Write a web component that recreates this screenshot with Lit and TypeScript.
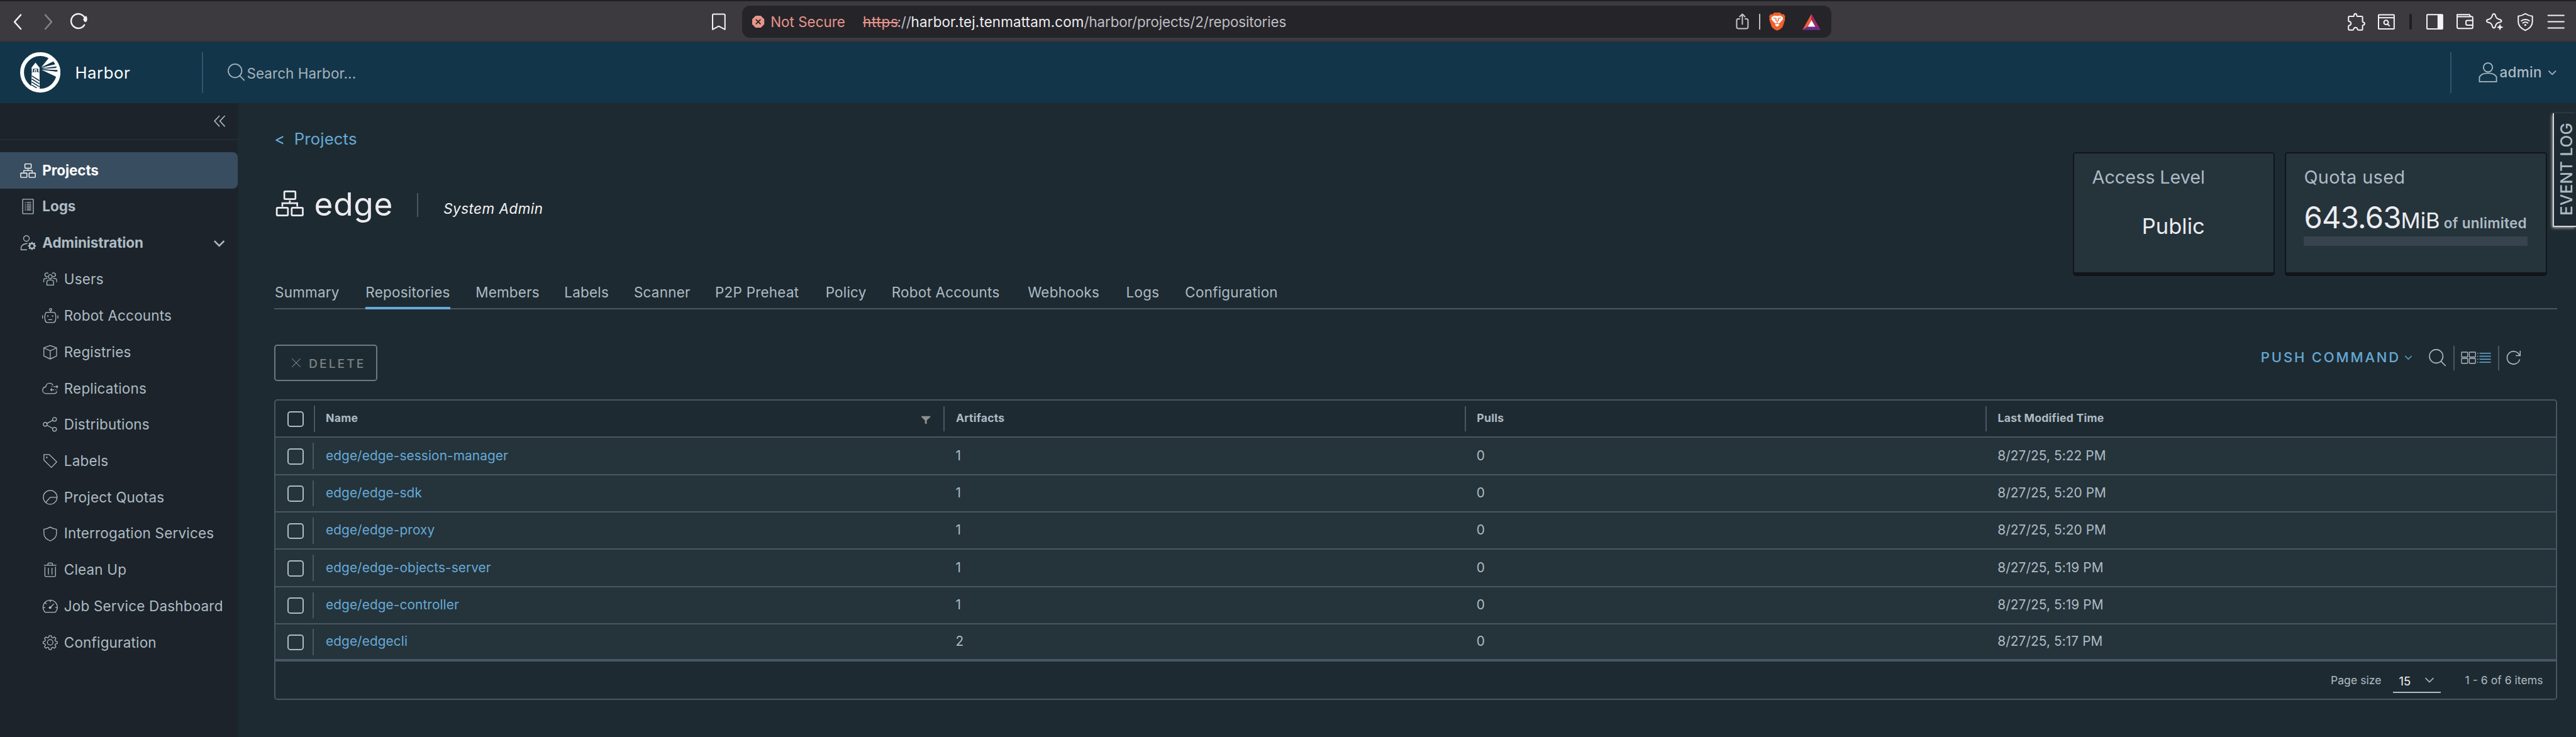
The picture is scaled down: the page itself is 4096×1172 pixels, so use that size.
import { LitElement, html, css, svg, nothing, TemplateResult, SVGTemplateResult } from "lit";
import { customElement, property } from "lit/decorators.js";

/* ---------- icon library (36 x 36 grid, stroked with currentColor) ---------- */

const GEAR =
  "M15.6 2.5h4.8l.9 4.1 2.6 1.1 3.6-2.2 3.3 3.3-2.2 3.6 1.1 2.6 4 .9v4.4l-4 .9-1.1 2.6 2.2 3.6-3.3 3.3-3.6-2.2-2.6 1.1-.9 3.9h-4.8l-.9-3.9-2.6-1.1-3.6 2.2-3.3-3.3 2.2-3.6-1.1-2.6-4-.9v-4.4l4-.9 1.1-2.6-2.2-3.6 3.3-3.3 3.6 2.2 2.6-1.1z";

const ICONS: Record<string, SVGTemplateResult> = {
  organization: svg`<rect x="12" y="4.5" width="12.4" height="8.6" rx="1"/><rect x="3.6" y="22.7" width="12.4" height="8.6" rx="1"/><rect x="20.2" y="22.7" width="12.4" height="8.6" rx="1"/><path d="M18.1 14.6v3M9.8 21.4v-3.8h16.6v3.8"/>`,
  logs: svg`<rect x="7.6" y="3.6" width="21" height="28.6" rx=".6"/><path d="M15.5 9.8h9M15.5 13.5h9M15.5 17.2h9M15.5 20.9h9M15.5 24.6h9M11.8 9.8h1.8M11.8 13.5h1.8M11.8 17.2h1.8M11.8 20.9h1.8M11.8 24.6h1.8"/>`,
  administrator: svg`<circle cx="15" cy="9" r="5.6"/><path d="M16 31.5H4.4v-5.7c1.8-4 6.6-6.6 12.6-6.8"/><path class="fill" fill-rule="evenodd" d="M24.9 15.8h2.2l.5 2 1.5.6 1.8-1.1 1.6 1.6-1.1 1.8.6 1.5 2 .5v2.2l-2 .5-.6 1.5 1.1 1.8-1.6 1.6-1.8-1.1-1.5.6-.5 2h-2.2l-.5-2-1.5-.6-1.8 1.1-1.6-1.6 1.1-1.8-.6-1.5-2-.5v-2.2l2-.5.6-1.5-1.1-1.8 1.6-1.6 1.8 1.1 1.5-.6zM26 20.7a3.2 3.2 0 1 0 0 6.4a3.2 3.2 0 0 0 0-6.4z"/>`,
  users: svg`<circle cx="18" cy="12.6" r="4.3"/><path d="M10.6 31.4v-7.2c0-2.8 3.4-4.4 7.4-4.4s7.4 1.6 7.4 4.4v7.2z"/><path d="M12 12.2A4.2 4.2 0 1 1 13.6 5.6M24 12.2A4.2 4.2 0 1 0 22.4 5.6M3.6 25v-5.4c0-2 3.2-3.6 8-3.3M32.4 25v-5.4c0-2-3.2-3.6-8-3.3"/>`,
  robot: svg`<circle cx="19" cy="4.8" r="2.5"/><path d="M19 7.4v3.3M11 10.8h14.6c2 0 3.2 1 3.8 2.8 1.6 4.4 1.6 9.6.4 15.2-.8 3-2.2 4.6-4.6 4.6H11.4c-2.4 0-3.8-1.6-4.6-4.6-1.2-5.6-1.2-10.8.4-15.2.6-1.8 1.8-2.8 3.8-2.8zM13.6 27.2h9M1 17.6v6.8M35.2 17.6v6.8"/><circle class="fill" cx="12.8" cy="19" r="1.6"/><circle class="fill" cx="23.4" cy="19" r="1.6"/>`,
  box: svg`<path d="M18 3.4l14.2 5.4v18L18 33.6 3.8 26.8v-18zM3.8 8.8L18 15.2l14.2-6.4M18 15.2v18.4"/>`,
  replication: svg`<path d="M24 11.2C22.8 8 20 6.2 16.6 6.2c-4.6 0-8 3.4-8.4 8.2C4 14.8 1.2 17.8 1.2 21.8c0 4.4 3.2 7.6 7.6 7.6h17.6c3.6 0 6-2.2 6-5.2M25 14h9.6M32 11.2l2.8 2.8-2.8 2.8M19 20.8h8M21.8 18l-2.8 2.8 2.8 2.8"/><path d="M20.6 14h1.6M29.4 20.8h1.4M32.6 20.8h1"/>`,
  share: svg`<circle cx="6.8" cy="18" r="4.3"/><circle cx="27.6" cy="6.8" r="4.3"/><circle cx="27.6" cy="29" r="4.3"/><path d="M10.7 16l13-7M10.7 20l13 7"/>`,
  tag: svg`<path d="M4 4h12l16.6 16.3L20.6 32.8 4 16.5z"/><circle class="fill" cx="10.4" cy="10.4" r="1.7"/>`,
  quota: svg`<circle cx="18" cy="18" r="15.4"/><path d="M33.4 18H18L8 29.5"/>`,
  shield: svg`<path d="M18 3c4.6 3 9 4.4 14 5v9.6c0 7.6-5.4 12.8-14 16.4C9.4 30.4 4 25.2 4 17.6V8c5-.6 9.4-2 14-5z"/>`,
  trash: svg`<path d="M4 8.2h28M13 7.8V4.6c0-.8.6-1.4 1.4-1.4h7.2c.8 0 1.4.6 1.4 1.4v3.2M6.2 11.6v19.6c0 1.4.8 2.2 2.2 2.2h19.2c1.4 0 2.2-.8 2.2-2.2V11.6M14 14v15M22 14v15"/>`,
  dashboard: svg`<path d="M6.6 31.6h22.8c2.8-2.8 4.6-6.6 4.6-10.8a16 16 0 0 0-32 0c0 4.2 1.8 8 4.6 10.8zM18 5v4.6M2.5 21.2h4.2M29.3 21.2h4.2M6.8 10.4l3 2.8M18.6 20.6l7.6-7.8"/><circle class="fill" cx="17.8" cy="21.4" r="2.9"/>`,
  gear: svg`<path stroke-linejoin="round" d=${GEAR}/><circle cx="18" cy="17.5" r="6.2"/>`,
  search: svg`<circle cx="14.6" cy="14.5" r="13.4"/><path d="M24.2 24.5L33.4 33.7"/>`,
  user: svg`<circle cx="18" cy="9.3" r="8"/><path d="M2.8 34.6v-8.4C5.4 22 11 19.6 18 19.6S30.6 22 33.2 26.2v8.4z"/>`,
  caret: svg`<path d="M3.5 11.5L18 26l14.5-14.5"/>`,
  collapse: svg`<path d="M17 2L2 18l15 16M33 2L18 18l15 16"/>`,
  close: svg`<path d="M3 3l30 30M33 3L3 33"/>`,
  grid: svg`<rect x="1.5" y="4.5" width="14.6" height="11.6" rx="1"/><rect x="20" y="4.5" width="14.6" height="11.6" rx="1"/><rect x="1.5" y="19.5" width="14.6" height="11.6" rx="1"/><rect x="20" y="19.5" width="14.6" height="11.6" rx="1"/>`,
  list: svg`<path d="M7 7.5h28M7 14.8h28M7 22h28M7 29.3h28M1.5 7.5h2.4M1.5 14.8h2.4M1.5 22h2.4M1.5 29.3h2.4"/>`,
  refresh: svg`<path d="M31.6 21.5A14.3 14.3 0 1 1 31 12.8M32.6 2.5v10.8H22.6"/>`,
  filter: svg`<path class="fill" d="M0 2h36v3L21.5 18.5V34L14 31V18.5L0 5z"/>`,
  back: svg`<path stroke-linecap="round" stroke-linejoin="round" d="M23.8 4.5L11.3 18.5 23.8 32.5"/>`,
  forward: svg`<path stroke-linecap="round" stroke-linejoin="round" d="M11.2 4.5L23.7 18.5 11.2 32.5"/>`,
  reload: svg`<path stroke-linecap="round" d="M29 24.5A14.3 14.3 0 1 1 30.2 11.5"/><path class="fill" d="M26.5 13.5c1.8-2.6 3.5-4.8 5-6.8 2 .2 3.2 3.4 3 7-.2 4-3 6-5 4.6-1.6-1.2-2.6-3-3-4.8z"/>`,
  bookmark: svg`<path stroke-linejoin="round" d="M6.3 5.5c0-1.4.9-2.3 2.3-2.3h20c1.4 0 2.3.9 2.3 2.3v28L18.5 27 6.3 33.5z"/>`,
  shareUp: svg`<path stroke-linecap="round" stroke-linejoin="round" d="M12.5 12.5h-2.5c-2 0-3.2 1.2-3.2 3.2v12.8c0 2 1.2 3.2 3.2 3.2h16c2 0 3.2-1.2 3.2-3.2V15.7c0-2-1.2-3.2-3.2-3.2h-2.5M18 23V3.5M12.8 8.2L18 3.2l5.2 5"/>`,
  puzzle: svg`<path stroke-linejoin="round" d="M4.5 7.5h8c1 0 1.3-.7 1.3-1.7 0-2.2 1-3.5 2.7-3.5s2.7 1.3 2.7 3.5c0 1 .3 1.7 1.3 1.7h8.2c1.5 0 2 .5 2 2v8c0 1 .3 1.3 1.2 1.6 2 .6 2.9 1.5 2.9 2.9s-.9 2.3-2.9 2.9c-.9.3-1.2.6-1.2 1.6V33c0 1.3-.4 1.7-1.7 1.7h-6.8c-1 0-1.2-.4-1.4-1.3-.5-2.7-2-3.9-4-3.9s-3.5 1.2-4 3.9c-.2.9-.4 1.3-1.4 1.3H4.5c-1.3 0-1.7-.4-1.7-1.7v-6c0-1 .5-1.2 1.3-1.4 2.6-.5 3.7-2 3.7-4s-1.1-3.5-3.7-4c-.8-.2-1.3-.5-1.3-1.5V9.5c0-1.5.4-2 1.7-2z"/>`,
  tabSearch: svg`<rect x="2.5" y="4.5" width="31" height="28" rx="1"/><path d="M3 10.2h30"/><circle cx="17.5" cy="19.5" r="4.3"/><path d="M20.8 23l3.8 4"/>`,
  sidebar: svg`<rect x="2.5" y="4" width="31" height="28.5" rx="1"/><path class="fill" d="M23.5 4h10v28.5h-10z"/>`,
  wallet: svg`<path stroke-linejoin="round" d="M2.5 4h24.5l2 3.8h1.5c2 0 3 1 3 2.8v18c0 2-.8 2.8-2.6 2.8H5.1c-1.8 0-2.6-.8-2.6-2.6zM2.8 8h26M33.5 15.5H22.5c-1.6 0-2.5.9-2.5 2.5v4.6c0 1.6.9 2.5 2.5 2.5h11"/>`,
  sparkle: svg`<path stroke-linejoin="round" d="M15.5 2.5c2 0 2.7 1.2 3.2 3.6.9 4.5 2.7 6.3 7.2 7.2 2.4.5 4.6 1.2 4.6 3.2s-2.2 2.7-4.6 3.2c-4.5.9-6.3 2.7-7.2 7.2-.5 2.4-1.2 3.6-3.2 3.6s-2.7-1.2-3.2-3.6c-.9-4.5-2.7-6.3-7.2-7.2-2.4-.5-4-1.2-4-3.2s1.6-2.7 4-3.2c4.5-.9 6.3-2.7 7.2-7.2.5-2.4 1.2-3.6 3.2-3.6z"/><path class="fill" d="M27.5 22.5l2 4.5 5 2-5 2-2 4.5-2-4.5-4.5-2 4.5-2z"/>`,
  vpn: svg`<path stroke-linejoin="round" d="M18 2.2c4.5 2.8 8.5 4.3 14 5V18c0 7.5-5.5 13.5-14 17.5C9.5 31.5 4 25.5 4 18V7.2c5.5-.7 9.5-2.2 14-5zM9.3 17c4.8-4.4 12.6-4.4 17.4 0M12.4 21.3c3.2-2.9 8-2.9 11.2 0"/><circle class="fill" cx="18" cy="24.5" r="1.9"/>`,
  menu: svg`<path stroke-linecap="round" d="M2 5.5h31.5M2 18h31.5M2 30.5h31.5"/>`,
};

@customElement("ui-icon")
export class UiIcon extends LitElement {
  static styles = css`
    :host { display: block; flex: none; width: 36px; height: 36px; --stroke: 2; }
    svg { display: block; width: 100%; height: 100%; fill: none; stroke: currentColor; stroke-width: var(--stroke); overflow: visible; }
    .fill { fill: currentColor; stroke: none; }
  `;
  @property() name = "";
  render() {
    return html`<svg viewBox="0 0 36 36">${ICONS[this.name] ?? nothing}</svg>`;
  }
}

/* ---------- browser toolbar ---------- */

@customElement("browser-bar")
export class BrowserBar extends LitElement {
  static styles = css`
    :host { display: block; }
    .bar { box-sizing: border-box; height: 84px; padding: 2px 22px 0 18px; display: flex; align-items: center; color: #f3f3f5; background: #3c3a3f; border-top: 2.5px solid #201f24; border-bottom: 2.5px solid #323138; }
    ui-icon { --stroke: 2.5; }
    .nav { display: flex; gap: 24px; width: 1389px; }
    .nav ui-icon { --stroke: 3; }
    .dim { color: #858488; }
    .pill { box-sizing: border-box; width: 2160px; height: 64px; margin-left: 29px; padding: 0 20px; border-radius: 16px; background: #252429; display: flex; align-items: center; font-size: 28px; white-space: pre; }
    .octagon { width: 24px; height: 24px; margin-right: 12px; flex: none; }
    .insecure { width: 183px; color: #e8958a; }
    .https { width: 68px; color: #e8958a; letter-spacing: 0.9px; text-decoration: line-through; text-decoration-thickness: 2.5px; }
    .path { color: #bfbec3; letter-spacing: -0.2px; }
    .domain { color: #ececf0; letter-spacing: 0.15px; }
    .actions { margin-left: auto; display: flex; align-items: center; }
    .actions > .up { color: #c5c4ca; }
    .rule { width: 2.5px; height: 32px; margin: 0 18px 0 14px; background: #bdbcc1; }
    .brave { width: 32px; height: 36px; display: block; }
    .bat { width: 36px; height: 32px; margin: 1px 2px 0 34px; display: block; }
    .tools { margin-left: auto; display: flex; gap: 24px; align-items: center; }
    .sep { width: 4px; height: 32px; margin: 0 4px; border-radius: 2px; background: #1f1e23; }
  `;
  render() {
    return html`
      <div class="bar">
        <div class="nav">
          <ui-icon name="back"></ui-icon>
          <ui-icon class="dim" name="forward"></ui-icon>
          <ui-icon name="reload"></ui-icon>
        </div>
        <ui-icon name="bookmark"></ui-icon>
        <div class="pill">
          <svg class="octagon" viewBox="0 0 24 24">
            <path d="M7 0h10l7 7v10l-7 7H7l-7-7V7z" fill="#e8958a"/>
            <path d="M8 8l8 8M16 8l-8 8" stroke="#252429" stroke-width="2.4" stroke-linecap="round"/>
          </svg>
          <span class="insecure">Not Secure</span>
          <span class="https">https</span><span class="path">://</span><span class="domain">harbor.tej.tenmattam.com</span><span class="path">/harbor/projects/2/repositories</span>
          <div class="actions">
            <ui-icon class="up" name="shareUp"></ui-icon>
            <div class="rule"></div>
            <svg class="brave" viewBox="0 0 32 36">
              <path d="M10 0h12l3 3.5 4-.5 3 4.5-1 3 .8 3L27 28.5 22 33l-6 3-6-3-5-4.5L.2 13.5 1 10.5 0 7.5 3 3l4 .5z" fill="#f0602c"/>
              <path d="M5 9l5-3 6 1 6-1 5 3 .6 4-5.6 6.5L19 22l-3-1.5L13 22l-3-2.5L4.4 13z" fill="#fff"/>
              <path d="M11 24.2l5-2 5 2-5 4z" fill="#fff"/>
              <path d="M8.5 10.5l5.5 1.2-.8 3.5 2.8 2 2.8-2-.8-3.5 5.5-1.2M16 17v4" fill="none" stroke="#f0602c" stroke-width="1.6"/>
            </svg>
            <svg class="bat" viewBox="0 0 36 32">
              <path d="M18 0L0 32l10.5-6.5L18 12.5z" fill="#f15a3a"/>
              <path d="M18 0l18 32-10.5-6.5L18 12.5z" fill="#9e2763"/>
              <path d="M0 32h36l-10.5-6.5h-15z" fill="#662d91"/>
              <path d="M18 12.5l7.5 13h-15z" fill="#fff"/>
            </svg>
          </div>
        </div>
        <div class="tools">
          <ui-icon name="puzzle"></ui-icon>
          <ui-icon name="tabSearch"></ui-icon>
          <div class="sep"></div>
          <ui-icon name="sidebar"></ui-icon>
          <ui-icon name="wallet"></ui-icon>
          <ui-icon name="sparkle"></ui-icon>
          <ui-icon name="vpn"></ui-icon>
          <ui-icon name="menu"></ui-icon>
        </div>
      </div>
    `;
  }
}

/* ---------- application header ---------- */

@customElement("harbor-header")
export class HarborHeader extends LitElement {
  static styles = css`
    :host { display: block; }
    .header { height: 120px; display: flex; align-items: center; background: #13354a; color: #fff; white-space: nowrap; }
    .logo { width: 80px; height: 80px; margin-left: 40px; }
    .title { width: 251px; margin-left: 29px; font-size: 32px; letter-spacing: 0.7px; }
    .rule { width: 2.5px; height: 80px; background: #34536a; }
    .search { display: flex; align-items: center; margin-left: 49px; color: #a6b3bc; font-size: 28px; letter-spacing: 0.1px; }
    .search ui-icon { --stroke: 2.2; margin-right: 2px; }
    .search span { padding-top: 2px; }
    .account { margin-left: auto; width: 249px; height: 80px; display: flex; align-items: center; color: #adbbc4; font-size: 28px; font-weight: 500; letter-spacing: 0.4px; }
    .account .rule { margin-right: 52px; }
    .who { width: 40px; height: 40px; margin-right: 3px; }
    .account span { padding-bottom: 2px; }
    .account .caret { width: 18px; height: 18px; margin-left: 12px; --stroke: 4; }
  `;
  render() {
    return html`
      <div class="header">
        <svg class="logo" viewBox="0 0 80 80">
          <circle cx="40" cy="40" r="36.2" fill="none" stroke="#fff" stroke-width="7.6"/>
          <path d="M42 30L58 10l9 8zM42.5 31L68 23l8 8.5zM42.5 32.8l32-1.3v5.5zM42.5 35l33 4-3.5 10z" fill="#fff"/>
          <path d="M42 30.5L66 18.5l3.7 5.5zM43 32L72 28v2.8zM43 34.4l31 .8v3z" fill="#13354a"/>
          <path d="M30.5 20.5L39 31.5H22z" fill="#fff"/>
          <path d="M23 31h15.5v8H23z" fill="#fff"/>
          <path d="M25.400 32.800h10.600v7h-10.600z" fill="#13354a"/>
          <path d="M28 33.800h5.500v6H28z" fill="#fff"/>
          <path d="M30 35.500h1.800v4.500H30z" fill="#13354a"/>
          <path d="M23 39.5h15.5v3L38.8 74 22 73z" fill="#fff"/>
          <path d="M23 47l15 9.5M23 53l15 9.5M23 59l15 9.5M23 65l10 6" stroke="#13354a" stroke-width="2"/>
        </svg>
        <div class="title">Harbor</div>
        <div class="rule"></div>
        <div class="search"><ui-icon name="search"></ui-icon><span>Search Harbor...</span></div>
        <div class="account">
          <div class="rule"></div>
          <ui-icon class="who" name="user"></ui-icon>
          <span>admin</span>
          <ui-icon class="caret" name="caret"></ui-icon>
        </div>
      </div>
    `;
  }
}

/* ---------- side navigation ---------- */

const SUB_ITEMS: [string, string][] = [
  ["users", "Users"],
  ["robot", "Robot Accounts"],
  ["box", "Registries"],
  ["replication", "Replications"],
  ["share", "Distributions"],
  ["tag", "Labels"],
  ["quota", "Project Quotas"],
  ["shield", "Interrogation Services"],
  ["trash", "Clean Up"],
  ["dashboard", "Job Service Dashboard"],
  ["gear", "Configuration"],
];

@customElement("side-nav")
export class SideNav extends LitElement {
  static styles = css`
    :host { display: block; width: 472px; flex: none; }
    .nav { height: 100%; background: #1c232a; color: #adbbc4; font-size: 28px; white-space: nowrap; }
    .top { box-sizing: border-box; height: 74px; display: flex; justify-content: flex-end; align-items: center; padding: 0 24px 0 0; border-bottom: 2.5px solid #232c34; margin-bottom: 24px; }
    .top ui-icon { width: 24px; height: 24px; --stroke: 3; }
    .item { box-sizing: border-box; height: 72px; padding: 0 25px 0 38px; display: flex; align-items: center; gap: 10px; font-weight: 700; letter-spacing: -0.1px; }
    .item ui-icon { --stroke: 1.7; }
    .item span { padding-bottom: 2px; }
    .active { background: #394d60; color: #fff; border-radius: 0 10px 10px 0; }
    .item .caret { margin-left: auto; width: 24px; height: 24px; --stroke: 5; }
    .sub { padding-left: 84px; gap: 11px; font-weight: 400; letter-spacing: 0.25px; }
    .sub ui-icon { width: 32px; height: 32px; --stroke: 1.8; }
    .sub span { padding-bottom: 1px; }
  `;
  render() {
    return html`
      <nav class="nav">
        <div class="top"><ui-icon name="collapse"></ui-icon></div>
        <div class="item active"><ui-icon name="organization"></ui-icon><span>Projects</span></div>
        <div class="item"><ui-icon name="logs"></ui-icon><span>Logs</span></div>
        <div class="item"><ui-icon name="administrator"></ui-icon><span>Administration</span><ui-icon class="caret" name="caret"></ui-icon></div>
        ${SUB_ITEMS.map(([icon, label]) => html`<div class="item sub"><ui-icon name=${icon}></ui-icon><span>${label}</span></div>`)}
      </nav>
    `;
  }
}

/* ---------- project header: breadcrumb, title, cards, tabs ---------- */

const TABS = ["Summary", "Repositories", "Members", "Labels", "Scanner", "P2P Preheat", "Policy", "Robot Accounts", "Webhooks", "Logs", "Configuration"];

@customElement("project-header")
export class ProjectHeader extends LitElement {
  static styles = css`
    :host { display: block; }
    .head { height: 344px; display: flex; justify-content: space-between; white-space: nowrap; }
    .crumb { display: flex; gap: 18px; height: 40px; line-height: 40px; margin-top: 52px; color: #65aad6; font-size: 32px; letter-spacing: 0.2px; }
    .title { display: flex; align-items: center; height: 80px; margin-top: 68px; color: #ececf0; }
    .title ui-icon { width: 64px; height: 64px; margin-left: -2px; --stroke: 1.9; }
    .name { width: 204px; margin-left: 17px; font-size: 64px; line-height: 80px; letter-spacing: 0.9px; }
    .rule { width: 2.5px; height: 48px; background: #485764; margin-top: 5px; }
    .role { margin: 18px 0 0 50px; font-size: 28px; font-style: italic; letter-spacing: 0.6px; color: #f4f4f6; }
    .cards { display: flex; gap: 20px; padding: 98px 20px 0 0; }
    .card { box-sizing: border-box; height: 246px; padding: 24px 37px 0 36px; border: 2.5px solid #111519; border-bottom-width: 8px; border-radius: 6px; background: #25333b; color: #ececf0; }
    .access { width: 400px; }
    .quota { width: 520px; }
    .label { font-size: 36px; line-height: 48px; color: #adbbc4; letter-spacing: -0.1px; }
    .quota .label { letter-spacing: 0.5px; }
    .public { margin-top: 45px; text-align: center; font-size: 43px; line-height: 56px; }
    .usage { display: flex; align-items: baseline; margin-top: 13px; line-height: 84px; height: 84px; }
    .amount { width: 193px; font-size: 59px; letter-spacing: -1px; }
    .unit { width: 87px; font-size: 43px; letter-spacing: 0; }
    .limit { font-size: 28px; font-weight: 600; color: #adbbc4; letter-spacing: 0.4px; }
    .meter { width: 444px; height: 19px; margin: -5px 0 0; background: #37434d; }
    .tabs { box-sizing: border-box; height: 66px; display: grid; grid-template-columns: 180px 218px 176px 138px 161px 219px 131px 270px 195px 117px auto; border-bottom: 2.5px solid #485764; color: #adbbc4; font-size: 28px; line-height: 65px; letter-spacing: 0.3px; white-space: nowrap; }
    .tab { justify-self: start; padding: 0 1px; }
    .on { box-shadow: inset 0 -5px #65aad6; }
  `;
  render() {
    return html`
      <div class="head">
        <div>
          <div class="crumb"><span>&lt;</span><span>Projects</span></div>
          <div class="title">
            <ui-icon name="organization"></ui-icon>
            <div class="name">edge</div>
            <div class="rule"></div>
            <div class="role">System Admin</div>
          </div>
        </div>
        <div class="cards">
          <div class="card access">
            <div class="label">Access Level</div>
            <div class="public">Public</div>
          </div>
          <div class="card quota">
            <div class="label">Quota used</div>
            <div class="usage"><span class="amount">643.63</span><span class="unit">MiB</span><span class="limit">of unlimited</span></div>
            <div class="meter"></div>
          </div>
        </div>
      </div>
      <div class="tabs">
        ${TABS.map((t) => html`<div class="tab ${t === "Repositories" ? "on" : ""}">${t}</div>`)}
      </div>
    `;
  }
}

/* ---------- repository list ---------- */

interface Repo { name: string; artifacts: number; pulls: number; modified: string; }

const REPOS: Repo[] = [
  { name: "edge/edge-session-manager", artifacts: 1, pulls: 0, modified: "8/27/25, 5:22 PM" },
  { name: "edge/edge-sdk", artifacts: 1, pulls: 0, modified: "8/27/25, 5:20 PM" },
  { name: "edge/edge-proxy", artifacts: 1, pulls: 0, modified: "8/27/25, 5:20 PM" },
  { name: "edge/edge-objects-server", artifacts: 1, pulls: 0, modified: "8/27/25, 5:19 PM" },
  { name: "edge/edge-controller", artifacts: 1, pulls: 0, modified: "8/27/25, 5:19 PM" },
  { name: "edge/edgecli", artifacts: 2, pulls: 0, modified: "8/27/25, 5:17 PM" },
];

@customElement("repository-list")
export class RepositoryList extends LitElement {
  static styles = css`
    :host { display: block; }
    .toolbar { height: 178px; display: flex; justify-content: space-between; align-items: flex-start; white-space: nowrap; }
    .delete { box-sizing: border-box; width: 204px; height: 72px; margin-top: 70px; padding: 2px 0 0 31px; display: flex; align-items: center; border: 2.5px solid #6f7a7f; border-radius: 6px; color: #7b8385; font-size: 24px; font-weight: 500; letter-spacing: 3.8px; }
    .delete ui-icon { width: 20px; height: 20px; margin: 0 15px 4px 0; --stroke: 2.4; }
    .tools { display: flex; align-items: center; height: 48px; margin: 72px 70px 0 0; color: #adbbc4; }
    .push { display: flex; align-items: center; color: #65aad6; font-size: 27.5px; font-weight: 500; letter-spacing: 3.5px; padding-bottom: 4px; }
    .push ui-icon { width: 16px; height: 16px; margin: 2px 32px 0 8px; --stroke: 4; }
    .rule { width: 2.5px; height: 48px; background: #485764; }
    .find { margin-right: 13px; --stroke: 2; }
    .gridview { width: 30px; height: 30px; margin-left: 12px; --stroke: 2; }
    .listview { width: 29px; height: 29px; margin: 0 14px 1px 1px; color: #65aad6; --stroke: 2.4; }
    .reload { width: 32px; height: 32px; margin-left: 12px; --stroke: 2.2; }

    .table { box-sizing: border-box; height: 596px; border: 2.5px solid #485764; border-radius: 6px; overflow: hidden; color: #adbbc4; white-space: nowrap; }
    .row { box-sizing: border-box; height: 74px; display: grid; grid-template-columns: 75.5px 1249px 1033px 1033px 1fr; align-items: center; font-size: 26px; background: #25333b; border-bottom: 2.5px solid #485764; letter-spacing: 0.1px; }
    .row:last-of-type { border-bottom-width: 5px; }
    .header { background: none; font-size: 22px; font-weight: 700; letter-spacing: 0.3px; }
    .check { box-sizing: border-box; height: 52px; display: flex; align-items: center; padding: 2px 0 0 24px; border-right: 2.5px solid #485764; }
    .header .check { width: 78px; }
    .box { box-sizing: border-box; width: 32px; height: 32px; border: 2.5px solid #adbbc4; border-radius: 6px; }
    .cell { padding: 0 0 2px 24px; }
    .header .cell { box-sizing: border-box; height: 50px; line-height: 48px; padding-left: 24px; display: flex; justify-content: space-between; }
    .header .cell + .cell { border-left: 2.5px solid #485764; padding-left: 22px; }
    .header ui-icon { width: 18px; height: 18px; margin: 19px 26px 0 0; color: #8f8f8f; }
    .link { color: #65aad6; }
    .footer { height: 74px; display: flex; justify-content: flex-end; align-items: center; padding-right: 25px; font-size: 22px; }
    .select { box-sizing: border-box; width: 95px; height: 46px; margin: 4px 48px 0 23px; padding: 0 13px 0 12px; display: flex; justify-content: space-between; align-items: center; border-bottom: 2.5px solid #adbbc4; color: #f0f0f2; font-size: 23px; }
    .footer span { padding-bottom: 1px; }
    .select .caret { width: 20px; height: 20px; color: #b3b0ae; --stroke: 4; margin-bottom: 5px; }
  `;
  row(r: Repo): TemplateResult {
    return html`
      <div class="row">
        <div class="check"><div class="box"></div></div>
        <div class="cell link">${r.name}</div>
        <div class="cell">${r.artifacts}</div>
        <div class="cell">${r.pulls}</div>
        <div class="cell">${r.modified}</div>
      </div>
    `;
  }
  render() {
    return html`
      <div class="toolbar">
        <div class="delete"><ui-icon name="close"></ui-icon>DELETE</div>
        <div class="tools">
          <div class="push">PUSH COMMAND<ui-icon name="caret"></ui-icon></div>
          <ui-icon class="find" name="search"></ui-icon>
          <div class="rule"></div>
          <ui-icon class="gridview" name="grid"></ui-icon>
          <ui-icon class="listview" name="list"></ui-icon>
          <div class="rule"></div>
          <ui-icon class="reload" name="refresh"></ui-icon>
        </div>
      </div>
      <div class="table">
        <div class="body">
          <div class="row header">
            <div class="check"><div class="box"></div></div>
            <div class="cell">Name<ui-icon name="filter"></ui-icon></div>
            <div class="cell">Artifacts</div>
            <div class="cell">Pulls</div>
            <div class="cell">Last Modified Time</div>
          </div>
          ${REPOS.map((r) => this.row(r))}
        </div>
        <div class="footer">
          <span>Page size</span>
          <div class="select">15<ui-icon class="caret" name="caret"></ui-icon></div>
          <span>1 - 6 of 6 items</span>
        </div>
      </div>
    `;
  }
}

/* ---------- application shell ---------- */

@customElement("app-root")
export class AppRoot extends LitElement {
  static styles = css`
    :host { display: block; width: 100%; height: 1172px; overflow: hidden; background: #1e2a31; }
    .page { position: relative; zoom: 0.80188; width: 5108px; height: 1462px; display: flex; flex-direction: column; background: #1e2a31; font-family: Inter, "Liberation Sans", sans-serif; }
    .body { flex: 1; display: flex; min-height: 0; }
    .main { flex: 1; padding: 0 38px 0 72px; min-width: 0; }
    .events { box-sizing: border-box; position: absolute; right: 0; top: 224px; width: 46px; height: 226px; padding-left: 4px; display: flex; align-items: center; justify-content: center; background: #1e2a31; border-left: 2.5px solid #d6d4d4; border-bottom: 2.5px solid #d6d4d4; box-shadow: -1px 3px 6px #b9b9b9; color: #adbbc4; }
    .events span { writing-mode: vertical-rl; transform: rotate(180deg); font-size: 32px; font-weight: 500; letter-spacing: 0.4px; white-space: nowrap; }
  `;
  render() {
    return html`
      <div class="page">
        <browser-bar></browser-bar>
        <harbor-header></harbor-header>
        <div class="body">
          <side-nav></side-nav>
          <div class="main">
            <project-header></project-header>
            <repository-list></repository-list>
          </div>
        </div>
        <div class="events"><span>EVENT LOG</span></div>
      </div>
    `;
  }
}
